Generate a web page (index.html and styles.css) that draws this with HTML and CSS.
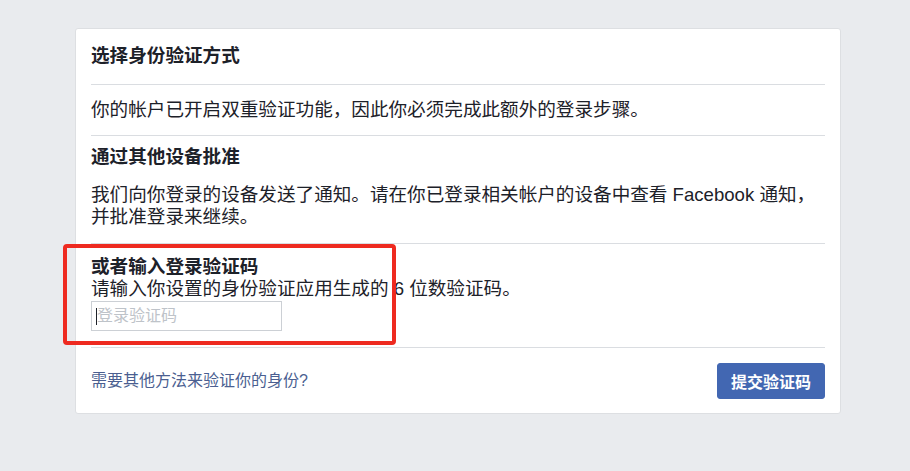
FILE: index.html
```html
<!DOCTYPE html>
<html lang="zh-CN">
<head>
<meta charset="utf-8">
<title>选择身份验证方式</title>
<link rel="stylesheet" href="styles.css">
</head>
<body>
<div class="card">
  <div class="card-head">选择身份验证方式</div>
  <div class="section intro">你的帐户已开启双重验证功能，因此你必须完成此额外的登录步骤。</div>
  <div class="section approve">
    <div class="heading">通过其他设备批准</div>
    <p class="text">我们向你登录的设备发送了通知。请在你已登录相关帐户的设备中查看 Facebook 通知，并批准登录来继续。</p>
  </div>
  <div class="section code">
    <div class="heading">或者输入登录验证码</div>
    <p class="text">请输入你设置的身份验证应用生成的 6 位数验证码。</p>
    <div class="field">
      <input class="code-input" type="text" placeholder="登录验证码">
      <span class="caret"></span>
    </div>
  </div>
  <div class="footer">
    <a class="alt-link" href="#">需要其他方法来验证你的身份?</a>
    <button class="submit" type="button">提交验证码</button>
  </div>
  <div class="highlight"></div>
</div>
</body>
</html>
```
FILE: styles.css
```css
html, body {
  margin: 0;
  padding: 0;
}
body {
  background: #e9ebee;
  font-family: "Liberation Sans", "Noto Sans CJK SC", sans-serif;
  color: #1d2129;
  width: 910px;
  height: 471px;
  overflow: hidden;
}
.card {
  position: relative;
  box-sizing: border-box;
  margin: 28px 0 0 75px;
  width: 766px;
  background: #fff;
  border: 1px solid #dddfe2;
  border-radius: 3px;
  padding: 0 15px;
}
.card-head {
  font-size: 18.6px;
  font-weight: bold;
  line-height: 22px;
  padding: 16px 0 17px;
  border-bottom: 1px solid #dadde1;
}
.section {
  border-bottom: 1px solid #dadde1;
  font-size: 18.6px;
  line-height: 22px;
}
.intro {
  padding: 14px 0 14px;
}
.heading {
  font-weight: bold;
  font-size: 18.6px;
  line-height: 22px;
}
.text {
  margin: 0;
  font-size: 18.6px;
  line-height: 22px;
}
.approve {
  padding: 10px 0 15px;
}
.approve .text {
  margin-top: 16px;
}
.code {
  padding: 12px 0 16px;
}
.field {
  position: relative;
  margin-top: 1px;
  width: 191px;
  height: 30px;
}
.code-input {
  display: block;
  box-sizing: border-box;
  width: 191px;
  height: 30px;
  border: 1px solid #ccd0d5;
  border-radius: 0;
  padding: 0 5px;
  margin: 0;
  font-family: "Liberation Sans", "Noto Sans CJK SC", sans-serif;
  font-size: 16px;
  color: #1d2129;
  outline: none;
}
.code-input::placeholder {
  color: #bec3c9;
}
.caret {
  position: absolute;
  left: 5px;
  top: 7px;
  width: 1px;
  height: 17px;
  background: #1d2129;
}
.footer {
  display: flex;
  align-items: center;
  justify-content: space-between;
  padding: 15px 0 14px;
}
.alt-link {
  font-size: 16px;
  line-height: 20px;
  color: #4b5f91;
  text-decoration: none;
}
.submit {
  height: 36px;
  padding: 0 13px;
  background: #4267b2;
  border: 1px solid #4267b2;
  border-radius: 3px;
  color: #fff;
  font-family: "Liberation Sans", "Noto Sans CJK SC", sans-serif;
  font-size: 16px;
  font-weight: bold;
}
.highlight {
  position: absolute;
  left: -13px;
  top: 215px;
  width: 333px;
  height: 101px;
  box-sizing: border-box;
  border: 4px solid #ee2a20;
  border-radius: 4px;
  pointer-events: none;
}
```
